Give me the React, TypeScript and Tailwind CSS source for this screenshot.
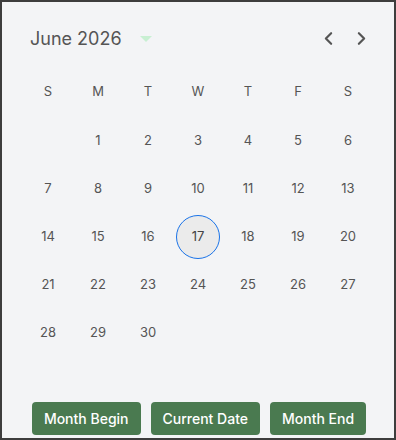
import { ChevronLeft, ChevronRight } from 'lucide-react'

const DAYS = ['S', 'M', 'T', 'W', 'T', 'F', 'S']

export default function App() {
  const firstDay = new Date(2026, 5, 1).getDay()
  const cells: (number | null)[] = [...Array(firstDay).fill(null), ...Array.from({ length: 30 }, (_, i) => i + 1)]

  return (
    <div
      className="w-[396px] h-[440px] border-2 border-[#3d3d3d] bg-[#f3f4f6] flex flex-col text-[#555]"
      style={{ fontFamily: 'Inter, "Noto Sans", sans-serif' }}
    >
      {/* Header */}
      <div className="flex items-center h-[28px] mt-[22px] pl-[28px] pr-[22px]">
        <span className="text-[18px] text-[#555]">June 2026</span>
        <span className="ml-[18px] mt-[2px] w-0 h-0 border-l-[6px] border-r-[6px] border-t-[6px] border-l-transparent border-r-transparent border-t-[#c8efd2]" />
        <div className="ml-auto flex items-center gap-[12px]">
          <ChevronLeft size={21} strokeWidth={2.5} className="text-[#555]" />
          <ChevronRight size={21} strokeWidth={2.5} className="text-[#555]" />
        </div>
      </div>

      {/* Day labels */}
      <div className="grid grid-cols-[repeat(7,50px)] ml-[21px] mt-[16px]">
        {DAYS.map((d, i) => (
          <div key={i} className="h-[48px] flex items-center justify-center text-[13px] text-[#555]">{d}</div>
        ))}
      </div>

      {/* Calendar grid */}
      <div className="grid grid-cols-[repeat(7,50px)] ml-[21px] mt-[1px]">
        {cells.map((day, idx) => {
          if (!day) return <div key={`e-${idx}`} className="h-[48px]" />
          const selected = day === 17
          return (
            <div key={day} className="h-[48px] flex items-center justify-center">
              <span
                className={`flex items-center justify-center text-[13px] ${
                  selected ? 'w-[44px] h-[44px] rounded-full border border-[#1a73e8] bg-[#ebebeb] text-[#444]' : 'text-[#555]'
                }`}
              >
                {day}
              </span>
            </div>
          )
        })}
      </div>

      {/* Actions */}
      <div className="mt-auto mb-[3px] ml-[2px] flex justify-center gap-[10px]">
        {['Month Begin', 'Current Date', 'Month End'].map((label) => (
          <button
            key={label}
            className="h-[33px] px-[12px] rounded-[4px] bg-[#4a7a50] text-white text-[14px] font-medium"
          >
            {label}
          </button>
        ))}
      </div>
    </div>
  )
}
